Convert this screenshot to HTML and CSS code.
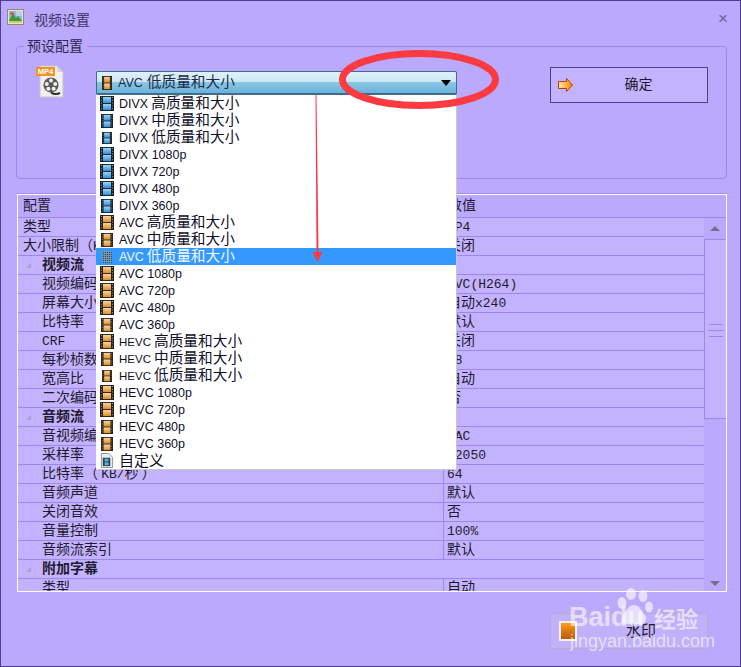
FILE: index.html
```html
<!DOCTYPE html>
<html lang="zh-CN">
<head>
<meta charset="utf-8">
<title>视频设置</title>
<link rel="stylesheet" href="styles.css">
</head>
<body>
<svg class="defs" width="0" height="0" aria-hidden="true">
  <defs>
    <linearGradient id="gb" x1="0" y1="0" x2="0" y2="1"><stop offset="0" stop-color="#9ad6f6"/><stop offset="1" stop-color="#2f8edc"/></linearGradient>
    <linearGradient id="go" x1="0" y1="0" x2="0" y2="1"><stop offset="0" stop-color="#fbd49a"/><stop offset="1" stop-color="#dc8e2a"/></linearGradient>
    <pattern id="dither" width="2" height="2" patternUnits="userSpaceOnUse"><rect width="2" height="2" fill="#3399ff"/><rect width="1" height="1" fill="#c88a3c"/><rect x="1" y="1" width="1" height="1" fill="#5a4a38"/></pattern>
    <symbol id="film-b" viewBox="0 0 14 16" preserveAspectRatio="none">
      <rect width="14" height="16" fill="#1c1f26"/>
      <path d="M1 1h1v1H1zM1 4h1v1H1zM1 7h1v1H1zM1 10h1v1H1zM1 13h1v1H1zM12 1h1v1h-1zM12 4h1v1h-1zM12 7h1v1h-1zM12 10h1v1h-1zM12 13h1v1h-1z" fill="#8c98a4"/>
      <rect x="3" y="1" width="8" height="6.500" fill="url(#gb)"/><rect x="3" y="8.500" width="8" height="6.500" fill="url(#gb)"/>
    </symbol>
    <symbol id="film-o" viewBox="0 0 14 16" preserveAspectRatio="none">
      <rect width="14" height="16" fill="#26211c"/>
      <path d="M1 1h1v1H1zM1 4h1v1H1zM1 7h1v1H1zM1 10h1v1H1zM1 13h1v1H1zM12 1h1v1h-1zM12 4h1v1h-1zM12 7h1v1h-1zM12 10h1v1h-1zM12 13h1v1h-1z" fill="#a89c88"/>
      <rect x="3" y="1" width="8" height="6.500" fill="url(#go)"/><rect x="3" y="8.500" width="8" height="6.500" fill="url(#go)"/>
    </symbol>
  </defs>
</svg>

<div class="window">
  <header class="titlebar">
    <svg class="title-icon" viewBox="0 0 17 16">
      <rect x=".5" y=".5" width="16" height="15" fill="#e8e4c8" stroke="#8a8a80"/>
      <rect x="2" y="2" width="13" height="10" fill="#8fb4e8"/>
      <rect x="9" y="2" width="6" height="5" fill="#c0cdf0"/>
      <path d="M2 12 6 4l3 5 2-2 4 5z" fill="#3d9a3a"/>
      <circle cx="5" cy="4.500" r="1.800" fill="#e8552a"/>
      <rect x="2" y="12" width="13" height="2" fill="#e0c860"/>
    </svg>
    <span class="title-text">视频设置</span>
    <span class="close">×</span>
  </header>

  <fieldset class="preset">
    <legend class="preset-legend">预设配置</legend>
    <svg class="mp4-icon" viewBox="0 0 28 33">
      <path d="M4 1h17l6 6v25H4z" fill="#f2f0ee" stroke="#c8c4c4"/>
      <path d="M21 1v6h6z" fill="#d8d6d6"/>
      <rect y="2" width="19" height="9" fill="#ef9420"/>
      <text x="9.500" y="9.400" class="mp4-tag" text-anchor="middle">MP4</text>
      <circle cx="15" cy="20" r="7.600" fill="#5a5a5a"/>
      <circle cx="15" cy="15.500" r="2" fill="#eeeeee"/><circle cx="10.800" cy="19" r="2" fill="#eeeeee"/><circle cx="19.200" cy="19" r="2" fill="#eeeeee"/><circle cx="12.400" cy="23.800" r="2" fill="#eeeeee"/><circle cx="17.600" cy="23.800" r="2" fill="#eeeeee"/>
      <path d="M15 27.600c3 1.800 6 1.800 9 .4" fill="none" stroke="#2c2c2c" stroke-width="2"/>
    </svg>

    <div class="combo">
      <div class="combo-face">
        <svg class="film film-combo"><use href="#film-o"/></svg>
        <span class="combo-label"><span class="lat">AVC</span> <span class="cn cn-combo">低质量和大小</span></span>
        <span class="combo-arrow"></span>
      </div>
      <ul class="dropdown">
        <li class="opt"><svg class="film"><use href="#film-b"/></svg><span class="lat">DIVX</span> <span class="cn">高质量和大小</span></li>
        <li class="opt"><svg class="film film-m"><use href="#film-b"/></svg><span class="lat">DIVX</span> <span class="cn">中质量和大小</span></li>
        <li class="opt"><svg class="film film-s"><use href="#film-b"/></svg><span class="lat">DIVX</span> <span class="cn">低质量和大小</span></li>
        <li class="opt"><svg class="film"><use href="#film-b"/></svg><span class="lat">DIVX 1080p</span></li>
        <li class="opt"><svg class="film"><use href="#film-b"/></svg><span class="lat">DIVX 720p</span></li>
        <li class="opt"><svg class="film"><use href="#film-b"/></svg><span class="lat">DIVX 480p</span></li>
        <li class="opt"><svg class="film film-m"><use href="#film-b"/></svg><span class="lat">DIVX 360p</span></li>
        <li class="opt"><svg class="film"><use href="#film-o"/></svg><span class="lat">AVC</span> <span class="cn">高质量和大小</span></li>
        <li class="opt"><svg class="film film-m"><use href="#film-o"/></svg><span class="lat">AVC</span> <span class="cn">中质量和大小</span></li>
        <li class="opt opt-active"><svg class="film film-s"><rect width="100%" height="100%" fill="url(#dither)"/></svg><span class="lat">AVC</span> <span class="cn">低质量和大小</span></li>
        <li class="opt"><svg class="film"><use href="#film-o"/></svg><span class="lat">AVC 1080p</span></li>
        <li class="opt"><svg class="film"><use href="#film-o"/></svg><span class="lat">AVC 720p</span></li>
        <li class="opt"><svg class="film"><use href="#film-o"/></svg><span class="lat">AVC 480p</span></li>
        <li class="opt"><svg class="film film-m"><use href="#film-o"/></svg><span class="lat">AVC 360p</span></li>
        <li class="opt"><svg class="film"><use href="#film-o"/></svg><span class="lat lat-narrow">HEVC</span> <span class="cn">高质量和大小</span></li>
        <li class="opt"><svg class="film film-m"><use href="#film-o"/></svg><span class="lat lat-narrow">HEVC</span> <span class="cn">中质量和大小</span></li>
        <li class="opt"><svg class="film film-s"><use href="#film-o"/></svg><span class="lat lat-narrow">HEVC</span> <span class="cn">低质量和大小</span></li>
        <li class="opt"><svg class="film"><use href="#film-o"/></svg><span class="lat">HEVC 1080p</span></li>
        <li class="opt"><svg class="film"><use href="#film-o"/></svg><span class="lat">HEVC 720p</span></li>
        <li class="opt"><svg class="film film-m"><use href="#film-o"/></svg><span class="lat">HEVC 480p</span></li>
        <li class="opt"><svg class="film film-m"><use href="#film-o"/></svg><span class="lat">HEVC 360p</span></li>
        <li class="opt"><svg class="film" viewBox="0 0 15 16"><path d="M1.500 .5h8l4 4v11h-12z" fill="#e8ecf0" stroke="#8a9098"/><rect x="3" y="5" width="8" height="9" fill="#28424e"/><rect x="5" y="6" width="4" height="3" fill="#58b0e8"/><rect x="5" y="10" width="4" height="3" fill="#58b0e8"/></svg><span class="cn cn-big">自定义</span></li>
      </ul>
    </div>

    <button class="btn btn-ok" type="button">
      <svg class="arrow-icon" viewBox="0 0 15 14"><defs><linearGradient id="ga" x1="0" y1="0" x2="1" y2="0"><stop offset="0" stop-color="#ffe8b8"/><stop offset=".6" stop-color="#ffb040"/><stop offset="1" stop-color="#ff7a00"/></linearGradient></defs><path d="M.5 3.500h8V.5l6 6.500-6 6.500v-3h-8z" fill="url(#ga)" stroke="#b4400c"/></svg>
      <span class="btn-text">确定</span>
    </button>
  </fieldset>

  <section class="grid-box">
    <div class="grid-head"><span class="c1">配置</span><span class="c2">数值</span></div>
    <div class="grid-body">
      <div class="rows">
        <div class="row"><span class="c1">类型</span><span class="c2"><span class="mono">MP4</span></span></div>
        <div class="row"><span class="c1">大小限制（<span class="mono">KB</span>）</span><span class="c2">关闭</span></div>
        <div class="row row-sec"><span class="c1"><i class="tri"></i>视频流</span><span class="c2"></span></div>
        <div class="row row-sub"><span class="c1">视频编码</span><span class="c2"><span class="mono">AVC(H264)</span></span></div>
        <div class="row row-sub"><span class="c1">屏幕大小</span><span class="c2">自动<span class="mono">x240</span></span></div>
        <div class="row row-sub"><span class="c1">比特率</span><span class="c2">默认</span></div>
        <div class="row row-sub"><span class="c1"><span class="mono">CRF</span></span><span class="c2">关闭</span></div>
        <div class="row row-sub"><span class="c1">每秒桢数</span><span class="c2"><span class="mono">18</span></span></div>
        <div class="row row-sub"><span class="c1">宽高比</span><span class="c2">自动</span></div>
        <div class="row row-sub"><span class="c1">二次编码</span><span class="c2">否</span></div>
        <div class="row row-sec"><span class="c1"><i class="tri"></i>音频流</span><span class="c2"></span></div>
        <div class="row row-sub"><span class="c1">音视频编码</span><span class="c2"><span class="mono">AAC</span></span></div>
        <div class="row row-sub"><span class="c1">采样率</span><span class="c2"><span class="mono">22050</span></span></div>
        <div class="row row-sub"><span class="c1">比特率（ <span class="mono">KB/</span>秒 ）</span><span class="c2"><span class="mono">64</span></span></div>
        <div class="row row-sub"><span class="c1">音频声道</span><span class="c2">默认</span></div>
        <div class="row row-sub"><span class="c1">关闭音效</span><span class="c2">否</span></div>
        <div class="row row-sub"><span class="c1">音量控制</span><span class="c2"><span class="mono">100%</span></span></div>
        <div class="row row-sub"><span class="c1">音频流索引</span><span class="c2">默认</span></div>
        <div class="row row-sec"><span class="c1"><i class="tri"></i>附加字幕</span><span class="c2"></span></div>
        <div class="row row-sub"><span class="c1">类型</span><span class="c2">自动</span></div>
      </div>
      <div class="scrollbar">
        <div class="sb-btn"><i class="sb-up"></i></div>
        <div class="sb-thumb"><i class="grip"></i><i class="grip grip-w"></i><i class="grip"></i></div>
        <div class="sb-rest"><i class="sb-down"></i></div>
      </div>
    </div>
  </section>

  <footer class="footer">
    <button class="btn btn-mark" type="button">
      <svg class="mark-icon" viewBox="0 0 18 20">
        <defs><linearGradient id="gm" x1="0" y1="0" x2="0" y2="1"><stop offset="0" stop-color="#ff9a20"/><stop offset="1" stop-color="#b85a08"/></linearGradient></defs>
        <rect width="18" height="20" fill="#f4f0ee"/><rect x="2" y="2" width="14" height="16" fill="url(#gm)"/>
      </svg>
      <span class="btn-text btn-text-lg">水印</span>
    </button>
  </footer>

  <svg class="annotation" viewBox="0 0 741 667" aria-hidden="true">
    <ellipse cx="419" cy="79.500" rx="76.500" ry="26" fill="none" stroke="#fb3a41" stroke-width="7"/>
    <path d="M315.500 95h1l2 157h4l-5 10-5-10h4z" fill="#fb3a41"/>
  </svg>

  <div class="watermark" aria-hidden="true">
    <svg class="paw" viewBox="0 0 40 38">
      <ellipse cx="9" cy="15" rx="4.500" ry="6"/><ellipse cx="18" cy="6" rx="5" ry="6"/><ellipse cx="30" cy="8" rx="4.500" ry="6"/><ellipse cx="36" cy="19" rx="4" ry="5.500"/>
      <path d="M21 17c6 0 7 6 11 10 3 5-1 10-6 9-3-.5-7-1-11 0-6 1-8-5-5-9 4-4 5-10 11-10z"/>
    </svg>
    <div class="wm-main"><span class="wm-bai">Baidu</span><span class="wm-cn">经验</span></div>
    <div class="wm-url">jingyan.baidu.com</div>
  </div>
</div>
</body>
</html>
```
FILE: styles.css
```css
* { box-sizing: border-box; }
html, body { margin: 0; padding: 0; }
body {
  width: 741px;
  height: 667px;
  overflow: hidden;
  font-family: "Noto Sans CJK SC", "Liberation Sans", sans-serif;
  font-size: 14px;
  color: #1f1a2e;
}
.defs { position: absolute; }
.window {
  position: relative;
  width: 741px;
  height: 667px;
  background: #baa9fc;
  border: 1px solid #4c3d8e;
  overflow: hidden;
}

/* title */
.titlebar { display: flex; align-items: flex-start; height: 35px; padding: 8px 12px 0 6px; }
.title-icon { width: 17px; height: 16px; }
.title-text { margin-left: 10px; color: #3f3468; line-height: 20px; }
.close { margin-left: auto; color: #6a6390; font-size: 17px; font-family: "Liberation Sans", sans-serif; line-height: 20px; }

/* preset group */
.preset {
  display: flex;
  align-items: flex-start;
  height: 143px;
  margin: 0 13px 0 15px;
  padding: 11px 19px 0 19px;
  border: 1px solid #9b87f2;
  border-radius: 4px;
  min-width: 0;
}
.preset-legend { padding: 0 4px 2px 3px; margin-left: -12px; line-height: 18px; color: #2d2650; }
.mp4-icon { width: 28px; height: 33px; margin-top: -2px; flex: none; }
.mp4-tag { font: 700 7.500px "Liberation Sans", sans-serif; fill: #fff; }

.combo { position: relative; width: 361px; height: 24px; margin: 4px 0 0 32px; flex: none; }
.combo-face {
  display: flex;
  align-items: center;
  height: 24px;
  padding: 0 5px 0 4px;
  border: 1px solid #3f6b8f;
  border-bottom-width: 2px;
  border-radius: 2px;
  background: linear-gradient(#dff1fa 0, #cde7f5 45%, #8ac6e4 50%, #6cb3da 100%);
}
.combo-label { display: flex; align-items: center; margin-left: 6px; line-height: 20px; color: #1c2a4a; }
.combo-arrow {
  margin-left: auto;
  margin-right: 0;
  width: 0; height: 0;
  border-left: 5.500px solid transparent;
  border-right: 5.500px solid transparent;
  border-top: 6px solid #000;
}
.film { width: 14px; height: 15px; flex: none; display: block; }
.film-m { width: 12px; height: 14px; margin: 0 1px; }
.film-s { width: 10px; height: 12px; margin: 0 2px; }
.film-combo { width: 10px; height: 14px; margin-left: 1px; }

.dropdown {
  position: absolute;
  top: 24px; left: 0;
  width: 361px;
  margin: 0; padding: 0;
  list-style: none;
  background: #fff;
  border-right: 1px solid #c8c8c8;
  border-bottom: 1px solid #c8c8c8;
  z-index: 2;
}
.opt {
  display: flex;
  align-items: center;
  height: 17px;
  padding-left: 4px;
  color: #10102a;
  white-space: pre;
  line-height: 17px;
}
.opt .film { margin-right: 5px; }
.opt .film-m { margin-left: 1px; margin-right: 6px; }
.opt .film-s { margin-left: 2px; margin-right: 7px; }
.opt-active { background: #3399ff; color: #f4f8ff; }
.lat { font: 12.500px "Liberation Sans", sans-serif; }
.lat-narrow { font-size: 11.500px; }
.cn { font-size: 14.700px; margin-left: 3px; padding-bottom: 4px; }
.cn-combo { margin-left: 4px; }
.cn-big { font-size: 15px; margin-left: 0; padding-bottom: 2px; }

.btn {
  display: flex;
  align-items: center;
  width: 158px;
  height: 36px;
  padding: 0 0 0 7px;
  border: 1px solid #4c3d8e;
  background: #c3b3fe;
  color: #1f1a2e;
  font: inherit;
  flex: none;
}
.btn-ok { margin-left: 93px; }
.arrow-icon { width: 15px; height: 14px; flex: none; }
.btn-text { flex: 1; text-align: center; line-height: 20px; padding: 0 3px 4px 0; }
.btn-text-lg { font-size: 15px; padding: 0 2px 2px 0; }

/* grid */
.grid-box {
  width: 710px;
  height: 398px;
  margin: 15px 0 0 16px;
  border: 1px solid #fff;
  box-shadow: 0 -1px 0 #a08df2;
  overflow: hidden;
  line-height: 14px;
}
.grid-head {
  display: flex;
  height: 23px;
  padding-bottom: 4px;
  align-items: center;
  border-bottom: 1px solid #9b87f2;
}
.grid-head .c1 { width: 426px; padding-left: 5px; flex: none; }
.grid-head .c2 { padding-left: 4px; }
.grid-body { display: flex; height: 374px; }
.rows { width: 686px; flex: none; background: #c3b3fe; overflow: hidden; }
.row {
  display: flex;
  height: 19px;
  border-bottom: 1px solid #9b87f2;
}
.c1, .c2 { display: block; white-space: pre; }
.row .c1 {
  position: relative;
  width: 426px;
  flex: none;
  padding-left: 5px;
  border-right: 1px solid #9b87f2;
}
.row .c2 { padding-left: 3px; }
.row-sub .c1 { padding-left: 24px; }
.row-sec .c1 { padding-left: 24px; font-weight: 700; border-right-color: transparent; }
.mono { font: 13px "Liberation Mono", monospace; }
.tri {
  position: absolute;
  left: 8px; top: 7px;
  width: 0; height: 0;
  border-left: 5px solid transparent;
  border-bottom: 5px solid #a99bd6;
}

/* scrollbar */
.scrollbar { flex: 1; display: flex; flex-direction: column; }
.sb-btn { height: 21px; display: flex; align-items: center; justify-content: center; }
.sb-up { width: 0; height: 0; border-left: 5px solid transparent; border-right: 5px solid transparent; border-bottom: 5px solid #75708a; }
.sb-thumb {
  height: 180px;
  display: flex;
  flex-direction: column;
  align-items: center;
  justify-content: center;
  gap: 5px;
  padding-top: 2px;
  background: #c3b3fe;
  border: 1px solid #9b87f2;
  border-right: 0;
}
.grip { display: block; width: 14px; height: 1px; background: #9b87f2; }
.grip-w { width: 16px; }
.sb-rest { flex: 1; display: flex; align-items: flex-end; justify-content: center; padding-bottom: 6px; }
.sb-down { width: 0; height: 0; border-left: 5px solid transparent; border-right: 5px solid transparent; border-top: 5px solid #75708a; }

/* footer */
.footer { display: flex; justify-content: flex-end; margin: 21px 32px 0 0; }
.btn-mark { padding-left: 8px; border-color: #b4adcf; background: #c0b1fb; }
.mark-icon { width: 18px; height: 20px; flex: none; }

/* overlays */
.annotation { position: absolute; left: -1px; top: -1px; width: 741px; height: 667px; pointer-events: none; z-index: 3; }
.watermark { position: absolute; left: 568px; top: 587px; width: 135px; height: 66px; color: rgba(255,255,255,.62); z-index: 4; pointer-events: none; }
.paw { position: absolute; left: 44px; top: 0; width: 40px; height: 38px; fill: rgba(255,255,255,.62); }
.wm-main { position: absolute; left: 0; top: 12px; display: flex; align-items: center; height: 34px; }
.wm-bai { font: 700 27px "Liberation Sans", sans-serif; width: 85px; }
.wm-cn { font-size: 22px; font-weight: 700; }
.wm-url { position: absolute; left: 1px; top: 43px; font: 18px "Liberation Sans", sans-serif; white-space: nowrap; }
```
